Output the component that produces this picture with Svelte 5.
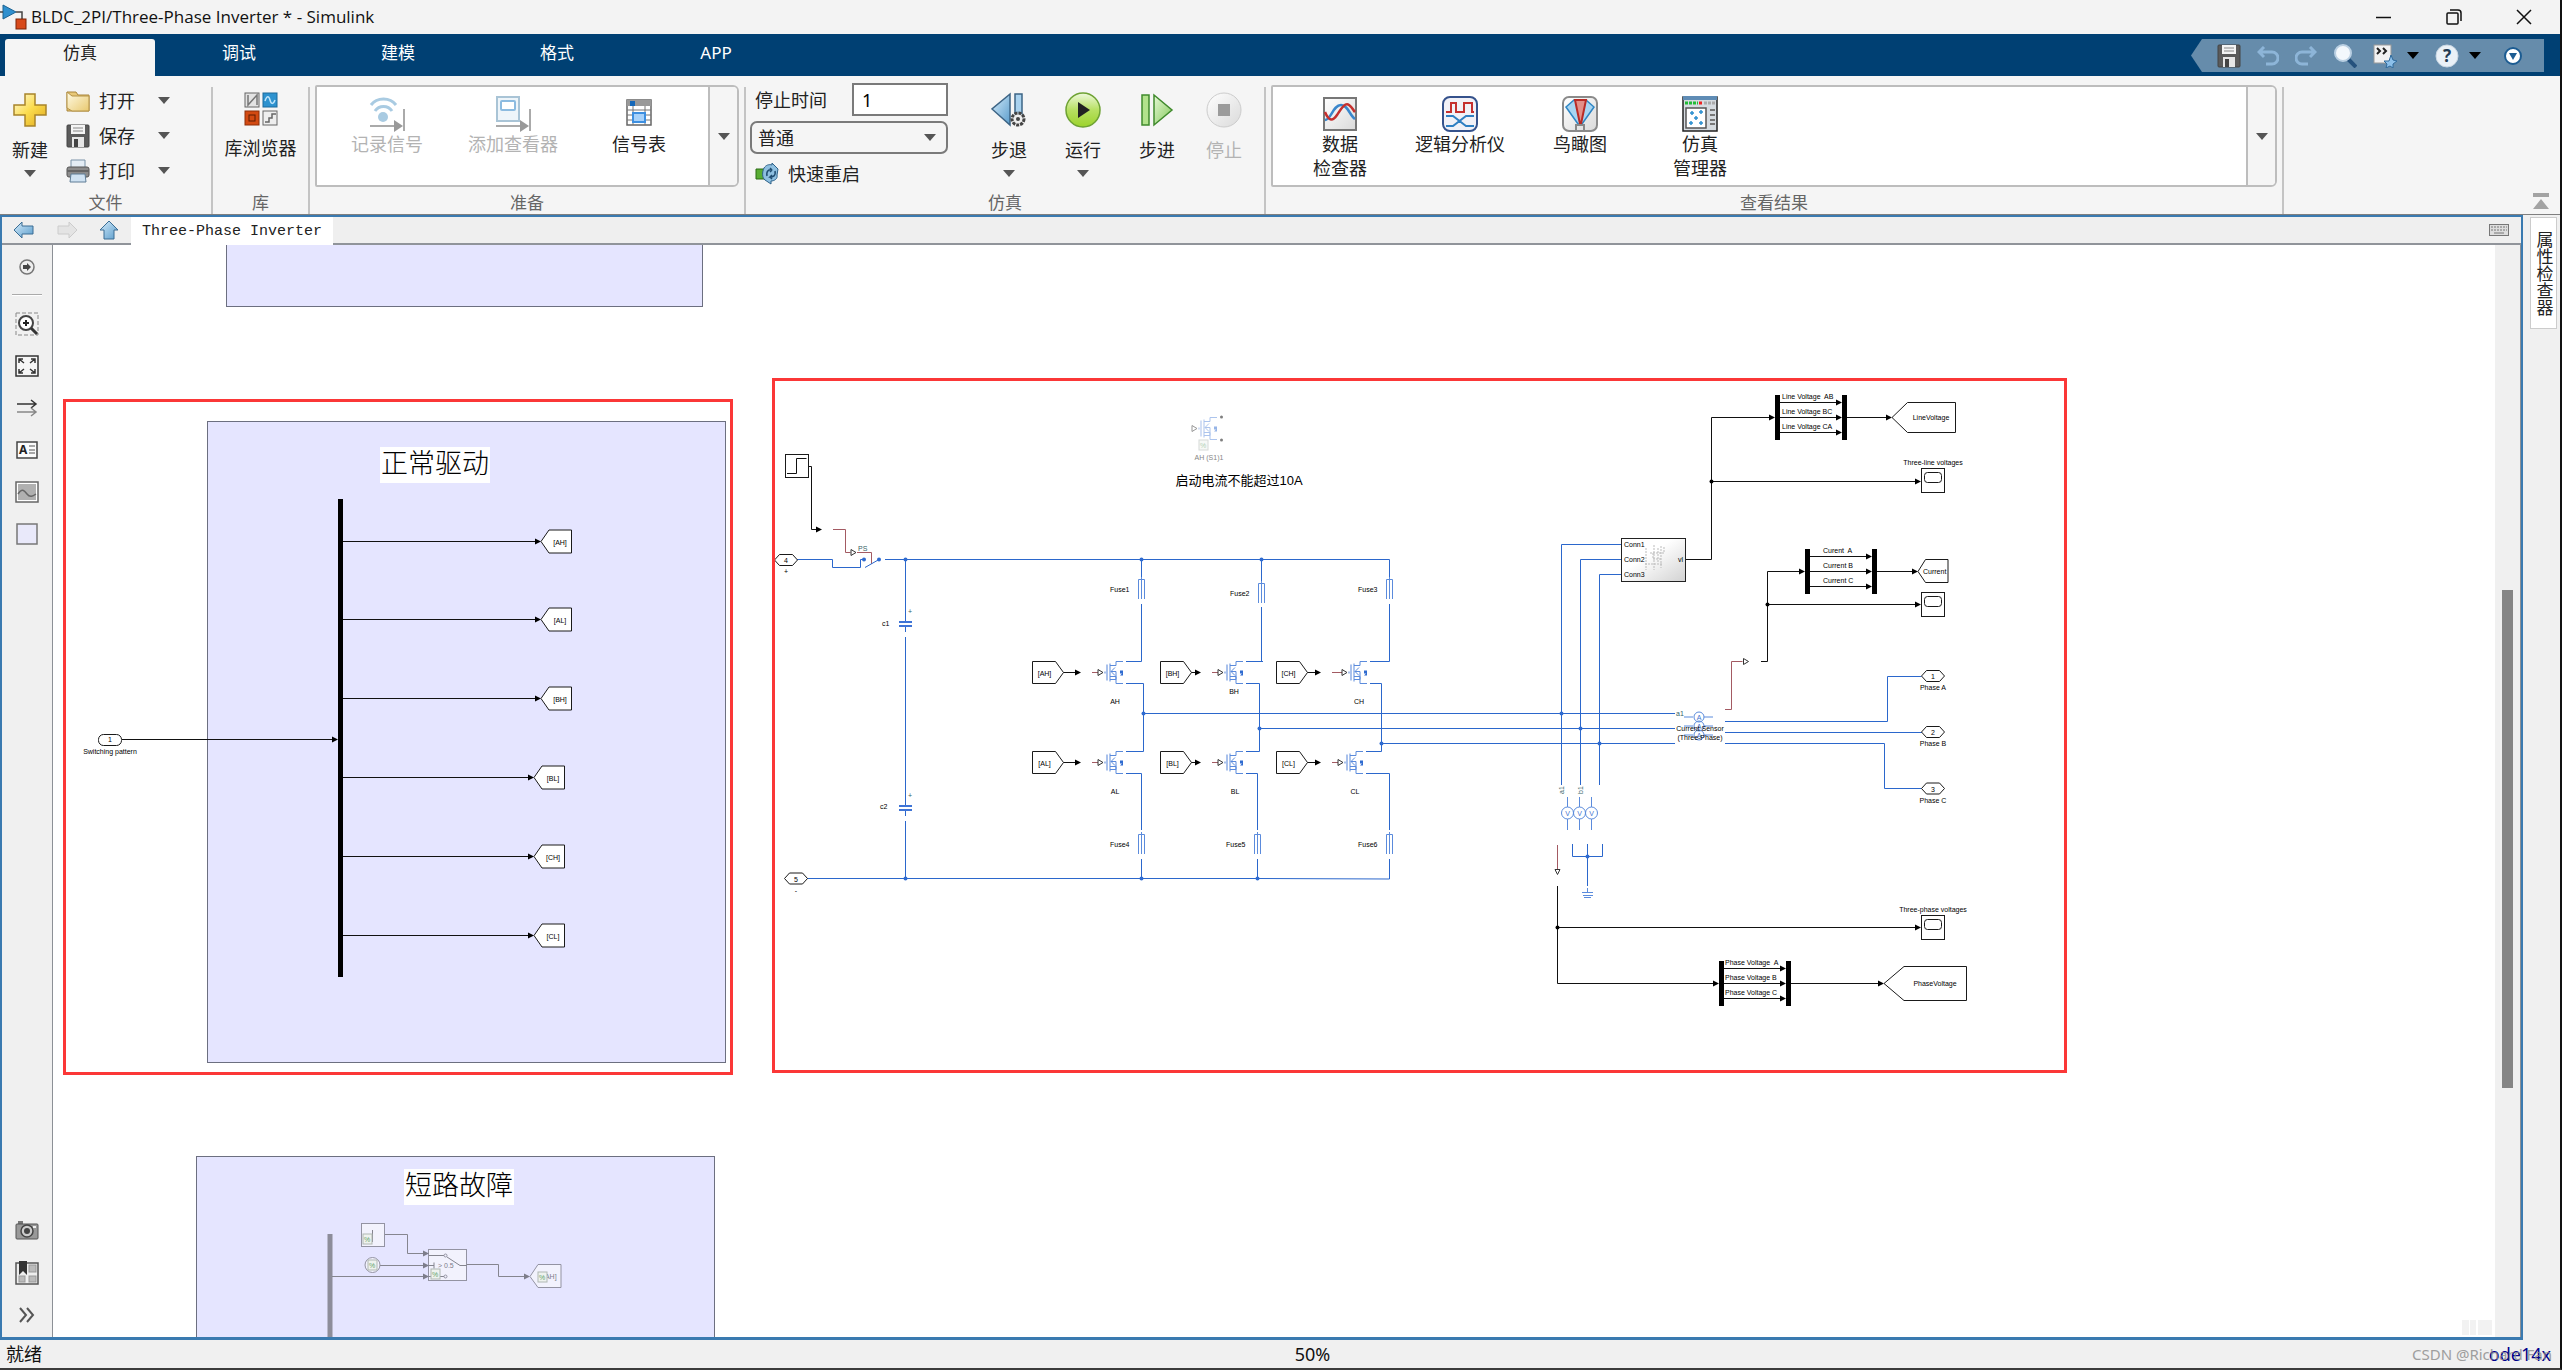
<script lang="ts">
	let tab = $state(0);
	let stopTime = $state('1');
	let mode = $state('普通');

	const tabs = ['仿真', '调试', '建模', '格式', 'APP'];

	const fileRows = [
		{ icon: 'open', label: '打开' },
		{ icon: 'save', label: '保存' },
		{ icon: 'print', label: '打印' }
	];

	const prepare = [
		{ icon: 'log', label: '记录信号', disabled: true },
		{ icon: 'viewer', label: '添加查看器', disabled: true },
		{ icon: 'table', label: '信号表', disabled: false }
	];

	const run = [
		{ icon: 'back', label: '步退', menu: true, disabled: false },
		{ icon: 'run', label: '运行', menu: true, disabled: false },
		{ icon: 'step', label: '步进', menu: false, disabled: false },
		{ icon: 'stop', label: '停止', menu: false, disabled: true }
	];

	const results = [
		{ icon: 'inspector', lines: ['数据', '检查器'] },
		{ icon: 'logic', lines: ['逻辑分析仪'] },
		{ icon: 'bird', lines: ['鸟瞰图'] },
		{ icon: 'manager', lines: ['仿真', '管理器'] }
	];

	const paletteTop = ['zoom', 'fit', 'signals', 'note', 'image', 'area'];
	const paletteBottom = ['camera', 'library', 'more'];

	// gate signals leaving the demux on the left
	const gates = [
		{ name: '[AH]', x: 541, y: 541.5 },
		{ name: '[AL]', x: 541, y: 619.5 },
		{ name: '[BH]', x: 541, y: 698.5 },
		{ name: '[BL]', x: 534, y: 777.5 },
		{ name: '[CH]', x: 534, y: 856.5 },
		{ name: '[CL]', x: 534, y: 935.5 }
	];

	const fuses = [
		{ name: 'Fuse1', x: 1141.5, y: 579 },
		{ name: 'Fuse2', x: 1261.5, y: 583 },
		{ name: 'Fuse3', x: 1389.5, y: 579 },
		{ name: 'Fuse4', x: 1141.5, y: 834 },
		{ name: 'Fuse5', x: 1257.5, y: 834 },
		{ name: 'Fuse6', x: 1389.5, y: 834 }
	];

	const switches = [
		{ name: 'AH', from: 1032.5, tip: 1081, x: 1092, gate: 1098, y: 672.5, lx: 1115, ly: 704 },
		{ name: 'BH', from: 1160.5, tip: 1201, x: 1212, gate: 1218, y: 672.5, lx: 1234, ly: 694 },
		{ name: 'CH', from: 1276.5, tip: 1321, x: 1332, gate: 1342, y: 672.5, lx: 1359, ly: 704 },
		{ name: 'AL', from: 1032.5, tip: 1081, x: 1092, gate: 1098, y: 762.5, lx: 1115, ly: 794 },
		{ name: 'BL', from: 1160.5, tip: 1201, x: 1212, gate: 1218, y: 762.5, lx: 1235, ly: 794 },
		{ name: 'CL', from: 1276.5, tip: 1321, x: 1332, gate: 1338, y: 762.5, lx: 1355, ly: 794 }
	];

	const buses = [
		{ x: 1775, y: 395, tx: 1782, labels: ['Line Voltage  AB', 'Line Voltage BC', 'Line Voltage CA'] },
		{ x: 1805, y: 549, tx: 1823, labels: ['Curent  A', 'Current B', 'Current C'] },
		{ x: 1719, y: 961, tx: 1725, labels: ['Phase Voltage  A', 'Phase Voltage B', 'Phase Voltage C'] }
	];

	const scopes = [
		{ y: 468.5, label: 'Three-line voltages' },
		{ y: 592.5, label: '' },
		{ y: 915.5, label: 'Three-phase voltages' }
	];

	const ports = [
		{ n: 4, x: 786, y: 560, label: '+' },
		{ n: 5, x: 796, y: 878.5, label: '-' },
		{ n: 1, x: 1933, y: 676, label: 'Phase A' },
		{ n: 2, x: 1933, y: 732, label: 'Phase B' },
		{ n: 3, x: 1933, y: 788.5, label: 'Phase C' }
	];

	const joints = [
		[905.5, 559.5], [1141.5, 559.5], [1261.5, 559.5],
		[905.5, 878.5], [1141.5, 878.5], [1257.5, 878.5],
		[1143.5, 713.5], [1259.5, 728.5], [1381.5, 743.5],
		[1561.5, 713.5], [1580.5, 728.5], [1599.5, 743.5],
		[1587.5, 856.5]
	];
</script>

{#snippet caret()}
	<svg class="caret" viewBox="0 0 12 7" aria-hidden="true"><path d="M0 0h12L6 7z" fill="currentColor" /></svg>
{/snippet}

{#snippet floppy()}
	<rect x="1" y="1" width="22" height="22" rx="1" fill="#5b5b5b" stroke="#444" />
	<rect x="5" y="1" width="14" height="9" fill="#f4f4f4" />
	<path d="M7 4h10M7 7h10" stroke="#888" />
	<rect x="6" y="13" width="12" height="10" fill="#e6e6e6" />
	<rect x="8" y="15" width="4" height="8" fill="#444" />
{/snippet}

{#snippet icon(name: string)}
	{#if name === 'new'}
		<svg width="34" height="36" viewBox="0 0 34 36"><path d="M12 2h10v11h11v10H22v11H12V23H1V13h11z" fill="url(#gold)" stroke="#a8842a" stroke-width="1.5" /></svg>
	{:else if name === 'open'}
		<svg width="24" height="24" viewBox="0 0 24 24"><path d="M1 3h9l2 3h11v16H1z" fill="#e8c877" stroke="#a8843a" /><path d="M1 3l5 4h17v15H6l-5-3z" fill="url(#folder)" stroke="#b59347" /></svg>
	{:else if name === 'save'}
		<svg width="24" height="24" viewBox="0 0 24 24">{@render floppy()}</svg>
	{:else if name === 'print'}
		<svg width="24" height="24" viewBox="0 0 24 24"><path d="M5 1h14v8H5z" fill="#e4edf5" stroke="#7b93a8" /><rect x="1" y="8" width="22" height="10" rx="2" fill="#8c8c8c" stroke="#555" /><rect x="1" y="11" width="22" height="2" fill="#666" /><path d="M5 15h14l1 8H4z" fill="#cfe2f2" stroke="#5f7d96" /></svg>
	{:else if name === 'browser'}
		<svg width="34" height="34" viewBox="0 0 34 34"><rect x="1" y="1" width="14" height="14" fill="#e3e3e3" stroke="#666" /><path d="M4 3v10l9-10v10" fill="none" stroke="#777" stroke-width="1.5" /><rect x="19" y="1" width="14" height="14" fill="#2d92cf" stroke="#1d6a9c" /><path d="M21 9c2-6 4-5 5-1s3 5 5 0" fill="none" stroke="#bfe4fa" stroke-width="1.5" /><rect x="1" y="19" width="14" height="14" fill="#d34a12" stroke="#8e2f08" /><rect x="5" y="23" width="6" height="6" fill="none" stroke="#5e1c02" /><rect x="19" y="19" width="14" height="14" fill="#eee" stroke="#666" /><path d="M21 30h4v-4h3v-4h4" fill="none" stroke="#666" stroke-width="1.5" /></svg>
	{:else if name === 'log'}
		<svg width="36" height="36" viewBox="0 0 36 36"><g fill="none" stroke="#a9cbe2" stroke-width="3"><path d="M2 9c6-8 19-8 25 0" /><path d="M6 15c4-6 13-6 17 0" /></g><circle cx="14" cy="21" r="5" fill="#a9cbe2" /><path d="M1 30h27M35 13v22" stroke="#aaa" stroke-width="2" /><path d="M25 24v12l9-6z" fill="#999" /></svg>
	{:else if name === 'viewer'}
		<svg width="36" height="36" viewBox="0 0 36 36"><rect x="2" y="1" width="22" height="24" fill="#eef5fa" stroke="#a9c4d6" stroke-width="2" /><rect x="6" y="5" width="14" height="9" rx="1" fill="#fff" stroke="#8cbbe0" stroke-width="2" /><path d="M1 30h27M35 13v22" stroke="#aaa" stroke-width="2" /><path d="M25 24v12l9-6z" fill="#999" /></svg>
	{:else if name === 'table'}
		<svg width="36" height="36" viewBox="0 0 36 36"><rect x="6" y="4" width="24" height="25" fill="#fff" stroke="#666" stroke-width="1.5" /><rect x="6" y="4" width="24" height="6" fill="#999" /><rect x="9" y="5" width="5" height="5" fill="#1567b8" /><path d="M6 14h24M6 19h24M6 24h24M12 10v19M24 10v19" stroke="#777" /><rect x="12" y="17" width="12" height="9" fill="#a8d2fa" stroke="#3d8fe0" stroke-width="2" /></svg>
	{:else if name === 'restart'}
		<svg width="24" height="22" viewBox="0 0 24 22"><path d="M1 6h9v10H1z" fill="#59ad33" stroke="#2b6b14" /><path d="M9 5c2-3 5-4 8-3V0l6 6-1 6c1 4-3 6-6 6v3l-6-4c-3-2-3-8-1-12z" fill="#8ebfe0" stroke="#2c6189" /><path d="M12 13c-1-5 2-7 5-6l-2-2m2 2l-2 2M20 8c1 5-2 6-5 6l2-2m-2 2l2 2" fill="none" stroke="#1f4c70" stroke-width="1.5" /></svg>
	{:else if name === 'back'}
		<svg width="36" height="36" viewBox="0 0 36 36"><path d="M19 2v31L1 17z" fill="url(#blue)" stroke="#3d6485" stroke-width="1.5" /><rect x="24" y="2" width="7" height="21" fill="#a9d2ef" stroke="#3d6485" stroke-width="1.5" /><circle cx="27" cy="27" r="6" fill="#eee" stroke="#444" stroke-width="3" stroke-dasharray="3 1" /><circle cx="27" cy="27" r="2" fill="#444" /></svg>
	{:else if name === 'run'}
		<svg width="36" height="36" viewBox="0 0 36 36"><circle cx="18" cy="18" r="17" fill="url(#green)" stroke="#6ea233" stroke-width="1.5" /><path d="M13 10l12 8-12 8z" fill="#222" /></svg>
	{:else if name === 'step'}
		<svg width="36" height="36" viewBox="0 0 36 36"><rect x="3" y="3" width="7" height="30" fill="#b2e28c" stroke="#3f8a2c" stroke-width="1.5" /><path d="M15 3l18 15-18 15z" fill="url(#lime)" stroke="#3f8a2c" stroke-width="1.5" /></svg>
	{:else if name === 'stop'}
		<svg width="36" height="36" viewBox="0 0 36 36"><circle cx="18" cy="18" r="17" fill="url(#silver)" stroke="#ccc" /><rect x="12" y="12" width="12" height="12" fill="#9b9b9b" /></svg>
	{:else if name === 'inspector'}
		<svg width="36" height="36" viewBox="0 0 36 36"><rect x="2" y="2" width="32" height="32" fill="url(#silver)" stroke="#777" stroke-width="2" /><path d="M3 24c6 0 8-15 16-15 7 0 9 11 14 14" fill="none" stroke="#3a87cc" stroke-width="2.5" /><path d="M3 16c4 10 8 9 12 3s8-13 12-10 4 5 6 7" fill="none" stroke="#c5302e" stroke-width="2.5" /></svg>
	{:else if name === 'logic'}
		<svg width="36" height="36" viewBox="0 0 36 36"><rect x="1" y="1" width="34" height="34" rx="7" fill="#f1f1f7" stroke="#35528c" stroke-width="2" /><path d="M4 16h5V7h5v9h8V7h8v9h2" fill="none" stroke="#c5302e" stroke-width="2" /><path d="M4 20h7l13 10h8M4 30h7l13-10h8" fill="none" stroke="#2f7fc2" stroke-width="2" /></svg>
	{:else if name === 'bird'}
		<svg width="36" height="36" viewBox="0 0 36 36"><rect x="1" y="1" width="34" height="34" rx="6" fill="url(#silver)" stroke="#8a8a8a" stroke-width="2" /><path d="M4 11l8-7h12l8 7-12 17h-4z" fill="#a8d5f2" stroke="#2f86c4" stroke-width="1.5" /><path d="M13 4h11l-5 24h-1z" fill="#e38f88" stroke="#b92a25" stroke-width="2" /><path d="M14 34v-5h8v5" fill="none" stroke="#888" stroke-width="2" /></svg>
	{:else if name === 'manager'}
		<svg width="36" height="36" viewBox="0 0 36 36"><rect x="1" y="1" width="34" height="34" fill="#d6dbe0" stroke="#222" stroke-width="1.5" /><rect x="1" y="0" width="34" height="4" fill="#5f8cb5" /><path d="M3 7h13" stroke="#20bb35" stroke-width="3" stroke-dasharray="3 1" /><path d="M17 7h3" stroke="#e22" stroke-width="3" /><path d="M22 7h11" stroke="#aaa" stroke-width="3" stroke-dasharray="3 1" /><rect x="4" y="12" width="20" height="20" fill="#fff" stroke="#555" stroke-width="1.5" /><path d="M8 17h4M10 15v4M17 16h4M19 14v4M12 22h4M14 20v4M7 27h4M9 25v4M17 27h4M19 25v4" stroke="#2b8fd0" stroke-width="1.5" /><path d="M28 14h5M28 19h5M28 24h5M28 28h5" stroke="#777" stroke-width="2" /></svg>
	{:else if name === 'zoom'}
		<svg width="24" height="24" viewBox="0 0 24 24"><rect x="1" y="1" width="22" height="22" fill="none" stroke="#888" stroke-dasharray="4 2" /><circle cx="11" cy="11" r="7" fill="#fff" stroke="#444" stroke-width="2" /><path d="M8 11h6M11 8v6" stroke="#222" stroke-width="2" /><path d="M16 16l6 6" stroke="#333" stroke-width="3" /></svg>
	{:else if name === 'fit'}
		<svg width="24" height="22" viewBox="0 0 24 22"><rect x="1" y="1" width="22" height="20" fill="#f6f6f6" stroke="#333" stroke-width="1.5" /><path d="M4 8V4h4M16 4h4v4M20 14v4h-4M8 18H4v-4M4 4l5 4M20 4l-5 4M20 18l-5-4M4 18l5-4" fill="none" stroke="#333" stroke-width="1.5" /></svg>
	{:else if name === 'signals'}
		<svg width="24" height="18" viewBox="0 0 24 18"><path d="M2 5h18M16 1l5 4-5 4" fill="none" stroke="#333" stroke-width="1.5" /><path d="M2 13h18M16 9l5 4-5 4" fill="none" stroke="#888" stroke-width="1.5" /></svg>
	{:else if name === 'note'}
		<svg width="22" height="18" viewBox="0 0 22 18"><rect x="1" y="1" width="20" height="16" fill="#fbfbfb" stroke="#444" stroke-width="1.5" /><text x="3" y="13" font-size="12" font-weight="700" fill="#222">A</text><path d="M13 5h6M13 9h6M13 12h6" stroke="#555" /></svg>
	{:else if name === 'image'}
		<svg width="24" height="22" viewBox="0 0 24 22"><rect x="1" y="1" width="22" height="20" fill="#fff" stroke="#666" stroke-width="1.5" /><rect x="3" y="3" width="18" height="16" fill="#b0b0b0" /><path d="M3 13c4-6 6-4 9 0s6 2 9 0" fill="none" stroke="#666" stroke-width="1.5" /></svg>
	{:else if name === 'area'}
		<svg width="22" height="22" viewBox="0 0 22 22"><rect x="1" y="1" width="20" height="20" fill="#e9e9fa" stroke="#777" stroke-width="1.5" /></svg>
	{:else if name === 'camera'}
		<svg width="24" height="20" viewBox="0 0 24 20"><rect x="3" y="0" width="5" height="4" fill="#777" /><rect x="1" y="3" width="22" height="15" rx="1" fill="#999" stroke="#555" /><circle cx="12" cy="10" r="6" fill="#ccc" stroke="#444" stroke-width="1.5" /><circle cx="12" cy="10" r="3" fill="#444" /><rect x="18" y="5" width="3" height="2" fill="#eee" /></svg>
	{:else if name === 'library'}
		<svg width="24" height="24" viewBox="0 0 24 24"><rect x="1" y="2" width="22" height="21" fill="#eee" stroke="#555" stroke-width="1.5" /><rect x="14" y="4" width="7" height="7" fill="#bbb" stroke="#999" /><rect x="4" y="15" width="6" height="6" fill="#bbb" stroke="#999" /><rect x="14" y="15" width="7" height="6" fill="#bbb" stroke="#999" /><path d="M4 0h8v14l-4-4-4 4z" fill="#333" /></svg>
	{:else if name === 'more'}
		<svg width="18" height="16" viewBox="0 0 18 16"><path d="M2 1l6 7-6 7M9 1l6 7-6 7" fill="none" stroke="#555" stroke-width="2" /></svg>
	{/if}
{/snippet}

{#snippet arrow(x: number, y: number)}
	<path d="M{x} {y}l-6-3v6z" class="solid" />
{/snippet}

{#snippet mosfet(x: number, y: number)}
	<path class="gate" d="M{x} {y - 3}v6l5-3z" />
	<path class="pale" d="M{x + 6} {y}h2M{x + 9} {y - 8}v16" />
	<path class="part" d="M{x + 12} {y - 9}v18M{x + 12} {y - 7}h6v-4h7M{x + 12} {y + 4}h6v7h7M{x + 18} {y + 7}v-8h-5m4-4l-4 4 4 4M{x + 12} {y + 7}h6" />
	<path class="fillpart" d="M{x + 22} {y - 2}h3v5h-3l2-2h-2z" />
{/snippet}

{#snippet skipped(x: number, y: number)}
	<rect {x} {y} width="9" height="10" fill="#eef2ee" stroke="#b0b8b4" />
	<text class="percent" x={x + 1} y={y + 8}>%</text>
{/snippet}

<svg class="defs" width="0" height="0" aria-hidden="true">
	<defs>
		<linearGradient id="gold" x2="1" y2="1"><stop stop-color="#fffbe0" /><stop offset=".5" stop-color="#fbdc4e" /><stop offset="1" stop-color="#e0a81c" /></linearGradient>
		<linearGradient id="folder" x2="1" y2="1"><stop stop-color="#fffbe6" /><stop offset="1" stop-color="#e9c970" /></linearGradient>
		<linearGradient id="blue" x2="1" y2="1"><stop stop-color="#d5ecfb" /><stop offset="1" stop-color="#5a9ccb" /></linearGradient>
		<linearGradient id="green" x2="0" y2="1"><stop stop-color="#eef9dc" /><stop offset=".5" stop-color="#b7e062" /><stop offset="1" stop-color="#9cd32c" /></linearGradient>
		<linearGradient id="lime" x2="1" y2="1"><stop stop-color="#e6f8d6" /><stop offset="1" stop-color="#83c95a" /></linearGradient>
		<linearGradient id="silver" x2="1" y2="1"><stop stop-color="#fff" /><stop offset="1" stop-color="#dadada" /></linearGradient>
	</defs>
</svg>

<div class="app">
	<header class="title">
		<svg width="28" height="26" viewBox="0 0 28 26" aria-hidden="true"><path d="M3 1l13 7-13 7z" fill="#2f90cf" stroke="#1d6290" /><path d="M0 8h3M16 8h6v8" fill="none" stroke="#444" stroke-width="1.5" /><rect x="16" y="15" width="10" height="10" fill="#d84a1b" stroke="#7d2508" /></svg>
		<h1>BLDC_2PI/Three-Phase Inverter * - Simulink</h1>
		<div class="window-buttons">
			<button aria-label="最小化"><svg width="16" height="16" viewBox="0 0 16 16"><path d="M0 8.5h15" /></svg></button>
			<button aria-label="还原"><svg width="16" height="16" viewBox="0 0 16 16"><rect x="1" y="4" width="11" height="11" rx="1" /><path d="M4 1h8a3 3 0 0 1 3 3v8" /></svg></button>
			<button aria-label="关闭"><svg width="16" height="16" viewBox="0 0 16 16"><path d="M1 1l14 14M15 1L1 15" /></svg></button>
		</div>
	</header>

	<nav class="tabs">
		{#each tabs as name, i (name)}
			<button class:active={tab === i} onclick={() => (tab = i)}>{name}</button>
		{/each}
		<div class="quick">
			<button aria-label="保存"><svg width="24" height="24" viewBox="0 0 24 24">{@render floppy()}</svg></button>
			<button aria-label="撤销"><svg width="22" height="20" viewBox="0 0 22 20"><path d="M7 1L2 6l5 5M2 6h13a5 5 0 0 1 0 12H9" fill="none" stroke="#8db5d8" stroke-width="3" /></svg></button>
			<button aria-label="重做"><svg width="22" height="20" viewBox="0 0 22 20"><path d="M15 1l5 5-5 5M20 6H7a5 5 0 0 0 0 12h6" fill="none" stroke="#8db5d8" stroke-width="3" /></svg></button>
			<button aria-label="查找"><svg width="24" height="24" viewBox="0 0 24 24"><path d="M15 15l8 8" stroke="#26527d" stroke-width="4" /><circle cx="10" cy="9" r="8" fill="#f3f8fc" stroke="#b9cfe2" stroke-width="2" /></svg></button>
			<button class="with-menu" aria-label="收藏夹"><svg width="24" height="24" viewBox="0 0 24 24"><rect x="1" y="1" width="17" height="18" fill="#f2f2f2" stroke="#999" /><path d="M4 4l3 3-3 3M10 4l3 3-3 3" fill="none" stroke="#222" stroke-width="2" /><path d="M18 11l2 5 4 1-4 3v4l-3-2-4 2 1-4-3-3h5z" fill="#8cc0ea" stroke="#2f6a9c" /></svg>{@render caret()}</button>
			<button class="with-menu" aria-label="帮助"><svg width="24" height="24" viewBox="0 0 24 24"><circle cx="12" cy="12" r="11" fill="#eaf1f7" stroke="#c8d6e2" /><text x="12" y="18" text-anchor="middle" font-size="17" font-weight="700" fill="#223a52">?</text></svg>{@render caret()}</button>
			<button aria-label="自定义"><svg width="20" height="20" viewBox="0 0 20 20"><circle cx="10" cy="10" r="8" fill="#fff" stroke="#1c5c92" stroke-width="2" /><path d="M6 7h8l-4 7z" fill="#1c5c92" /></svg></button>
		</div>
	</nav>

	<section class="ribbon">
		<div class="group file">
			<div class="body">
				<button class="big">{@render icon('new')}<span>新建</span>{@render caret()}</button>
				<div class="rows">
					{#each fileRows as row (row.label)}
						<button class="row">{@render icon(row.icon)}<span>{row.label}</span>{@render caret()}</button>
					{/each}
				</div>
			</div>
			<h2>文件</h2>
		</div>
		<div class="group lib">
			<div class="body">
				<button class="big">{@render icon('browser')}<span>库浏览器</span></button>
			</div>
			<h2>库</h2>
		</div>
		<div class="group prep">
			<div class="gallery">
				<div class="items">
					{#each prepare as item (item.label)}
						<button class="item" disabled={item.disabled}>{@render icon(item.icon)}<span>{item.label}</span></button>
					{/each}
				</div>
				<button class="expand" aria-label="展开准备">{@render caret()}</button>
			</div>
			<h2>准备</h2>
		</div>
		<div class="group sim">
			<div class="body">
				<div class="settings">
					<div class="field"><label for="stop">停止时间</label><input id="stop" bind:value={stopTime} /></div>
					<div class="select">
						<select bind:value={mode} aria-label="仿真模式">
							<option>普通</option>
							<option>加速</option>
						</select>
						{@render caret()}
					</div>
					<button class="restart">{@render icon('restart')}<span>快速重启</span></button>
				</div>
				{#each run as item (item.label)}
					<button class="big" disabled={item.disabled}>
						{@render icon(item.icon)}<span>{item.label}</span>
						{#if item.menu}{@render caret()}{/if}
					</button>
				{/each}
			</div>
			<h2>仿真</h2>
		</div>
		<div class="group review">
			<div class="gallery">
				<div class="items">
					{#each results as item (item.icon)}
						<button class="item">
							{@render icon(item.icon)}
							{#each item.lines as line (line)}<span>{line}</span>{/each}
						</button>
					{/each}
				</div>
				<button class="expand" aria-label="展开查看结果">{@render caret()}</button>
			</div>
			<h2>查看结果</h2>
		</div>
		<button class="collapse" aria-label="最小化工具条"><svg width="16" height="17" viewBox="0 0 16 17"><path d="M0 0h16v4H0zM8 6l8 10H0z" fill="#a3a3a3" /></svg></button>
	</section>

	<div class="workspace">
		<main class="editor">
			<div class="crumbs">
				<button aria-label="后退"><svg width="22" height="18" viewBox="0 0 22 18"><path d="M9 1v4h11v8H9v4L1 9z" fill="url(#blue)" stroke="#3a6d94" /></svg></button>
				<button aria-label="前进"><svg width="22" height="18" viewBox="0 0 22 18"><path d="M13 1v4H2v8h11v4l8-8z" fill="#e4e4e4" stroke="#ccc" /></svg></button>
				<button aria-label="上一级"><svg width="20" height="20" viewBox="0 0 20 20"><path d="M10 1l9 9h-4v9H5v-9H1z" fill="url(#blue)" stroke="#3a6d94" /></svg></button>
				<a href="#inverter">Three-Phase Inverter</a>
				<svg class="keyboard" width="20" height="12" viewBox="0 0 20 12" aria-hidden="true"><rect x=".5" y=".5" width="19" height="11" fill="#ddd" stroke="#777" /><path d="M2 3h16M2 6h16" stroke="#777" stroke-dasharray="2 1" /><path d="M5 9h10" stroke="#777" /></svg>
			</div>
			<div class="stage">
				<aside class="palette">
					<button aria-label="隐藏浏览器"><svg width="16" height="16" viewBox="0 0 16 16"><circle cx="8" cy="8" r="7" fill="#eee" stroke="#777" stroke-width="1.5" /><path d="M4 6h4V4l4 4-4 4v-2H4z" fill="#444" /></svg></button>
					<hr />
					{#each paletteTop as name (name)}
						<button aria-label={name}>{@render icon(name)}</button>
					{/each}
					<div class="spacer"></div>
					{#each paletteBottom as name (name)}
						<button aria-label={name}>{@render icon(name)}</button>
					{/each}
				</aside>

				<svg class="canvas" role="img" aria-label="Three-Phase Inverter">
					<defs>
						<linearGradient id="block" x2="1" y2="1"><stop offset=".4" stop-color="#fff" /><stop offset="1" stop-color="#d2d2d2" /></linearGradient>
					</defs>
					<g transform="translate(-53 -245)">
						<rect class="area" x="226.5" y="200.5" width="476" height="106" />
						<rect class="area" x="207.5" y="421.5" width="518" height="641" />
						<rect class="area" x="196.5" y="1156.5" width="518" height="260" />

						<rect x="380" y="447" width="110" height="36" fill="#fff" />
						<text class="heading" x="435" y="473">正常驱动</text>
						<rect x="404" y="1169" width="110" height="36" fill="#fff" />
						<text class="heading" x="459" y="1195">短路故障</text>

						<!-- normal drive -->
						<rect x="338" y="499" width="5" height="478" />
						{#each gates as g (g.name)}
							<path class="sig" d="M343 {g.y}H{g.x - 4}" />
							{@render arrow(g.x, g.y)}
							<path class="block" d="M{g.x} {g.y}l8-11.5h22.5v23H{g.x + 8}z" />
							<text class="mid" x={g.x + 19} y={g.y + 3}>{g.name}</text>
						{/each}
						<rect class="block" x="98.5" y="734.5" width="23" height="11" rx="5" />
						<text class="mid" x="110" y="742">1</text>
						<text class="mid" x="110" y="754">Switching pattern</text>
						<path class="sig" d="M122 739.5h212" />
						{@render arrow(338, 739.5)}

						<!-- short circuit fault, commented out -->
						<g class="off">
							<rect x="327.5" y="1234" width="5" height="110" fill="#8d8d9a" />
							<rect class="block" x="361.5" y="1223.5" width="23" height="23" />
							<path class="sig" d="M385 1234.5h22.5v19h17M380 1265.5h44M332 1276.5h92M467 1264.5h31.5v12h27" />
							<circle class="block" cx="372.5" cy="1265" r="7.5" />
							<rect class="block" x="428.5" y="1249.5" width="38" height="31" />
							<path class="sig" d="M429 1255.5h15M447 1257l13 8.5h7M429 1265.5h5m0-3v6M429 1276.5h15" />
							<circle class="block" cx="445.5" cy="1255.5" r="1.5" />
							<circle class="block" cx="445.5" cy="1276.5" r="1.5" />
							<text x="438" y="1268">&gt; 0.5</text>
							{@render arrow(429, 1253.5)}
							{@render arrow(429, 1265.5)}
							{@render arrow(429, 1276.5)}
							{@render arrow(530, 1276.5)}
							<path class="block" d="M530 1276.5l8-12h23v23h-23z" />
							<path class="sig" d="M372.5 1230v12M372 1260v5h5" />
							<text x="543" y="1279">[AH]</text>
							{@render skipped(363, 1234)}
							{@render skipped(368, 1260)}
							{@render skipped(431, 1269)}
							{@render skipped(538, 1272)}
						</g>

						<!-- precharge step and switch -->
						<rect class="block" x="785.5" y="454.5" width="23" height="23" />
						<path class="sig" d="M787 473.5h9.5v-15h10M809 466.5h2.5v63h6" />
						{@render arrow(822, 529.5)}
						<path class="ps" d="M833 529.5h12.5v23h5M857 552.5h14.5V564" />
						<path class="gate" d="M851 549.5v6l5-3z" />
						<text class="port" x="858" y="551">PS</text>
						<path class="wire" d="M797 559.5h35.5v8h28v-8h3M865 567.5l14-8M885 559.5h504.5" />
						<circle class="joint" cx="864" cy="559.5" r="2" />
						<circle class="joint" cx="879" cy="559.5" r="2" />
						<g opacity=".5">
							{@render mosfet(1192, 428.5)}
							<circle cx="1221.5" cy="417" r="1.5" />
							<circle cx="1221.5" cy="440" r="1.5" />
							{@render skipped(1199, 440)}
							<text class="mid" x="1209" y="460">AH (S1)1</text>
						</g>
						<text class="remark" x="1239" y="485">启动电流不能超过10A</text>

						<!-- dc link -->
						<path class="wire" d="M905.5 559.5V621M905.5 626v6M905.5 637v168M905.5 810v6M905.5 821v57.5" />
						<path class="plate" d="M899 622h13M899 626h13M899 806h13M899 810h13" />
						<text class="port" x="908" y="614">+</text>
						<text class="port" x="908" y="798">+</text>
						<text x="882" y="626">c1</text>
						<text x="880" y="809">c2</text>
						<path class="wire" d="M807 878.5h450.5l132 .5V859M1141.5 878.5V859M1257.5 878.5V859" />

						<!-- bridge -->
						<path class="wire" d="M1141.5 559.5V577M1261.5 559.5V581M1389.5 559.5V577" />
						<path class="wire" d="M1141.5 604v57.5H1126M1261.5 607v54.5M1263 661.5h-17M1389.5 604v57.5H1370" />
						<path class="wire" d="M1126 683.5h17.5v68H1126M1246 683.5h13.5v68H1246M1370 683.5h11.5v68H1366" />
						<path class="wire" d="M1126 773.5h15.5V830M1246 773.5h11.5V830M1366 773.5h23.5V830" />
						{#each fuses as f (f.name)}
							<path class="part" d="M{f.x - 3} {f.y + 20}v-19.5h6v19.5M{f.x} {f.y - 2}v22" />
							<text class="end" x={f.x - 12} y={f.y + 13}>{f.name}</text>
						{/each}
						{#each switches as s (s.name)}
							<path class="block" d="M{s.from} {s.y - 11}h23l8 11-8 11h-23z" />
							<text class="mid" x={s.from + 12} y={s.y + 3}>[{s.name}]</text>
							<path class="sig" d="M{s.from + 31} {s.y}H{s.tip - 5}" />
							{@render arrow(s.tip, s.y)}
							<path class="ps" d="M{s.x} {s.y}H{s.gate}" />
							{@render mosfet(s.gate, s.y)}
							<text class="mid" x={s.lx} y={s.ly}>{s.name}</text>
						{/each}

						<!-- phases and line voltages -->
						<path class="wire" d="M1143.5 713.5H1675M1259.5 728.5H1675M1381.5 743.5H1675" />
						<path class="wire" d="M1561.5 785V544.5H1622M1580.5 785V559.5H1622M1599.5 785V574.5H1622" />
						<rect x="1621.5" y="538.5" width="64" height="43" fill="url(#block)" stroke="#222" />
						<path d="M1646 548v22M1650 553h14v-7M1654 545v25M1661 546v22M1645 564h18M1653 553v6h8M1658 548v14" fill="none" stroke="#bbb" stroke-dasharray="2 1" />
						<text x="1624" y="547">Conn1</text>
						<text x="1624" y="562">Conn2</text>
						<text x="1624" y="577">Conn3</text>
						<text x="1678" y="562">vl</text>
						<path class="sig" d="M1686 559.5h25.5v-142h59M1711.5 481.5H1917M1847 417.5h41" />
						{@render arrow(1775, 417.5)}
						{@render arrow(1921, 481.5)}
						{@render arrow(1892, 417.5)}
						<path class="block" d="M1892 417.5l15.5-15h48v30h-48z" />
						<text class="mid" x="1931" y="420">LineVoltage</text>

						<!-- currents -->
						<path class="ps" d="M1725 709.5h6.5v-48h11" />
						<path class="gate" d="M1743.5 658.5v6l5-3z" />
						<path class="sig" d="M1761 661.5h6.5v-90h33M1767.5 604.5H1917M1877 571.5h36" />
						{@render arrow(1805, 571.5)}
						{@render arrow(1921, 604.5)}
						{@render arrow(1918, 571.5)}
						<path class="block" d="M1918 571.5l7.5-12h22.5v23h-22.5z" />
						<text x="1923" y="574">Current</text>
						<path class="part" d="M1684 717h9M1704 717h9M1684 726h9M1704 726h9M1684 735h9M1704 735h9" />
						{#each [717, 726, 735] as y (y)}
							<circle class="part" cx="1699" cy={y} r="5" />
							<text class="meter" x="1699" y={y + 3}>A</text>
						{/each}
						<text class="port" x="1676" y="716">a1</text>
						<text class="mid" x="1700" y="731">Current Sensor</text>
						<text class="mid" x="1700" y="740">(Three-Phase)</text>
						<path class="wire" d="M1725 721.5h162.5v-45h34M1725 732.5h197M1725 743.5h159.5v45h37" />

						<!-- phase voltages -->
						<text class="port" transform="translate(1564 794) rotate(-90)">a1</text>
						<text class="port" transform="translate(1583 794) rotate(-90)">b1</text>
						{#each [1567.5, 1579.5, 1591.5] as x (x)}
							<path class="part" d="M{x} 797v10M{x} 819v11" />
							<circle class="part" cx={x} cy="813" r="6" />
							<text class="meter" x={x} y="816">V</text>
						{/each}
						<path class="wire" d="M1572.5 844v12.5h30V844M1587.5 844v42" />
						<path class="part" d="M1587.5 888v4M1582 892.5h11M1583 895.5h10M1584 897.5h7" />
						<path class="ps" d="M1557.5 845v24" />
						<path class="gate" d="M1555 869.5h5l-2.5 5z" />
						<path class="sig" d="M1557.5 886v97.5h157M1557.5 927.5H1917M1791 983.5h88" />
						{@render arrow(1719, 983.5)}
						{@render arrow(1921, 927.5)}
						{@render arrow(1884, 983.5)}
						<path class="block" d="M1884 983.5l20-17h62.5v34H1904z" />
						<text class="mid" x="1935" y="986">PhaseVoltage</text>

						{#each buses as b (b.x)}
							<rect x={b.x} y={b.y} width="5" height="45" />
							<rect x={b.x + 67} y={b.y} width="5" height="45" />
							{#each b.labels as label, i (label)}
								<text x={b.tx} y={b.y + 4 + i * 15}>{label}</text>
								<path class="sig" d="M{b.x + 5} {b.y + 7.5 + i * 15}h58" />
								{@render arrow(b.x + 67, b.y + 7.5 + i * 15)}
							{/each}
						{/each}

						{#each scopes as s (s.y)}
							<text class="mid" x="1933" y={s.y - 4}>{s.label}</text>
							<rect class="block" x="1921.5" y={s.y} width="23" height="24" />
							<rect class="block" x="1924.5" y={s.y + 4} width="17" height="10" rx="3" />
						{/each}

						{#each ports as p (p.n)}
							<path class="block" d="M{p.x - 11.5} {p.y}l5-5.5h13l5 5.5-5 5.5h-13z" />
							<text class="mid" x={p.x} y={p.y + 3}>{p.n}</text>
							<text class="mid" x={p.x} y={p.y + 14}>{p.label}</text>
						{/each}

						{#each joints as [x, y] (x + '-' + y)}
							<circle class="joint" cx={x} cy={y} r="2" />
						{/each}
						<circle cx="1711.5" cy="481.5" r="2" />
						<circle cx="1767.5" cy="604.5" r="2" />
						<circle cx="1557.5" cy="927.5" r="2" />

						<rect class="mark" x="64.5" y="400.5" width="667" height="673" />
						<rect class="mark" x="773.5" y="379.5" width="1292" height="692" />
						<path d="M2462 1320h7v15h-7zM2470 1320h6v15h-6zM2478 1320h14v15h-14z" fill="#f2f2f2" />
					</g>
				</svg>
				<div class="scroll"><div class="thumb"></div></div>
			</div>
		</main>
		<aside class="dock"><button>属性检查器</button></aside>
	</div>

	<footer class="status">
		<span>就绪</span>
		<span>50%</span>
		<a href="#solver">ode14x</a>
		<span class="credit">CSDN @Richard Fan</span>
	</footer>
</div>

<style>
	:global(body) {
		margin: 0;
		background: #1b1b1b;
	}

	.defs {
		position: absolute;
	}

	.app {
		display: flex;
		flex-direction: column;
		height: 100vh;
		box-sizing: border-box;
		border-right: 2px solid #111;
		border-bottom: 2px solid #3c3c3c;
		background: #f0f0f0;
		color: #222;
		font-family: 'Noto Sans', 'Noto Sans CJK SC', sans-serif;
		font-size: 18px;
		line-height: 24px;
	}

	button {
		padding: 0;
		border: 0;
		background: none;
		color: inherit;
		font: inherit;
	}

	svg {
		display: block;
		flex: none;
	}

	.caret {
		width: 12px;
		height: 7px;
		color: #555;
	}

	.title {
		display: flex;
		align-items: center;
		gap: 3px;
		height: 34px;
		background: #f3f3f3;
		color: #111;
	}

	h1 {
		margin: 0;
		font-family: 'Open Sans', sans-serif;
		font-size: 17px;
		font-weight: 400;
	}

	.window-buttons {
		display: flex;
		gap: 54px;
		margin-left: auto;
		padding-right: 28px;
	}

	.window-buttons svg {
		fill: none;
		stroke: #111;
		stroke-width: 1.5;
	}

	.tabs {
		display: flex;
		height: 42px;
		box-sizing: border-box;
		padding: 5px 16px 0 5px;
		background: #004073;
		color: #fff;
	}

	.tabs > button {
		width: 150px;
		margin-right: 9px;
		padding-bottom: 10px;
		border-radius: 3px 3px 0 0;
		font-size: 17px;
	}

	.tabs > .active {
		background: #f5f5f5;
		color: #222;
	}

	.quick {
		display: flex;
		align-items: center;
		gap: 16px;
		height: 33px;
		box-sizing: border-box;
		margin-left: auto;
		padding: 0 21px 0 26px;
		background: #668cab;
		clip-path: polygon(11px 0, 100% 0, 100% 100%, 11px 100%, 0 50%);
	}

	.with-menu {
		display: flex;
		align-items: center;
		gap: 10px;
	}

	.quick .caret {
		color: #000;
	}

	.quick > :last-child {
		margin-left: 6px;
	}

	.ribbon {
		display: flex;
		height: 138px;
		border-bottom: 1px solid #7f7f7f;
		background: #f5f5f5;
	}

	.group {
		display: flex;
		flex-direction: column;
		justify-content: space-between;
		box-sizing: border-box;
		padding-top: 9px;
		border-right: 2px solid #c4c4c4;
		border-image: linear-gradient(transparent 12px, #c4c4c4 12px) 1;
	}

	.group h2 {
		margin: 0;
		color: #666;
		font-size: 17px;
		font-weight: 400;
		text-align: center;
		line-height: 22px;
	}

	.file { width: 213px; }
	.lib { width: 97px; }
	.prep { width: 436px; }
	.sim { width: 520px; }
	.review { flex: 1; max-width: 1018px; }

	.body {
		display: flex;
	}

	.big {
		display: flex;
		flex-direction: column;
		align-items: center;
		width: 74px;
		height: 100px;
		padding-top: 7px;
	}

	.big span {
		margin: 10px 0 8px;
		white-space: nowrap;
	}

	.file .big {
		width: 60px;
	}

	.lib .big {
		width: 100%;
	}

	.sim .big:last-child {
		width: 60px;
	}

	button:disabled {
		color: #b3b3b3;
	}

	.rows {
		display: flex;
		flex-direction: column;
		margin-top: -2px;
	}

	.row {
		display: flex;
		align-items: center;
		height: 35px;
		padding-left: 6px;
	}

	.row span {
		margin: 0 23px 0 9px;
	}

	.gallery {
		display: flex;
		height: 102px;
		box-sizing: border-box;
		margin: 0 5px;
		border: 2px solid #bdbdbd;
		border-radius: 2px 6px 6px 2px;
		background: #fff;
	}

	.items {
		display: flex;
		flex: 1;
		padding-left: 7px;
	}

	.item {
		display: flex;
		flex-direction: column;
		align-items: center;
		width: 120px;
		padding-top: 9px;
	}

	.prep .item {
		width: 126px;
	}

	.expand {
		display: grid;
		place-items: center;
		width: 29px;
		border-left: 2px solid #bdbdbd;
		background: #f5f5f5;
		border-radius: 0 4px 4px 0;
	}

	.settings {
		display: flex;
		flex-direction: column;
		gap: 5px;
		width: 198px;
		margin: -2px 24px 0 4px;
	}

	.field {
		display: flex;
		align-items: center;
		justify-content: space-between;
		padding-left: 5px;
	}

	input {
		width: 96px;
		height: 33px;
		box-sizing: border-box;
		padding: 0 8px;
		border: 2px solid #7a7a7a;
		background: #fff;
		font: inherit;
	}

	.select {
		position: relative;
	}

	select {
		width: 100%;
		height: 33px;
		padding: 0 6px;
		border: 2px solid #7a7a7a;
		border-radius: 7px;
		background: #f5f5f5;
		color: inherit;
		font: inherit;
		appearance: none;
	}

	.select .caret {
		position: absolute;
		top: 13px;
		right: 12px;
		pointer-events: none;
	}

	.restart {
		display: flex;
		align-items: center;
		gap: 9px;
		height: 30px;
		padding-left: 5px;
	}

	.collapse {
		align-self: flex-end;
		margin: 0 11px 4px auto;
	}

	.workspace {
		display: flex;
		flex: 1;
		min-height: 0;
	}

	.editor {
		display: flex;
		flex: 1;
		flex-direction: column;
		min-width: 0;
		border: 2px solid #3a7ab0;
		border-bottom-width: 3px;
	}

	.crumbs {
		display: flex;
		align-items: center;
		height: 26px;
		padding-left: 11px;
		border-bottom: 2px solid #90949a;
		background: #efefef;
	}

	.crumbs button {
		margin-right: 21px;
	}

	.crumbs button:nth-of-type(3) {
		margin-right: 12px;
	}

	.crumbs a {
		height: 28px;
		margin-bottom: -2px;
		padding: 0 11px;
		background: #fff;
		color: #222;
		font-family: 'Liberation Mono', monospace;
		font-size: 15px;
		line-height: 30px;
		text-decoration: none;
	}

	.keyboard {
		margin: 0 12px 0 auto;
	}

	.stage {
		display: flex;
		flex: 1;
		min-height: 0;
		border-right: 1px solid #8c9096;
	}

	.palette {
		display: flex;
		flex-direction: column;
		align-items: center;
		width: 50px;
		border-right: 1px solid #8c9096;
		padding: 1px 0;
	}

	.palette button {
		display: grid;
		place-items: center;
		width: 100%;
		height: 42px;
	}

	.palette hr {
		width: 30px;
		margin: 6px 0 7px;
		border: 0;
		border-top: 1px solid #aaa;
		border-bottom: 1px solid #fff;
	}

	.spacer {
		flex: 1;
	}

	.canvas {
		flex: 1;
		min-width: 0;
		background: #fff;
		font-family: 'Liberation Sans', 'Noto Sans CJK SC', sans-serif;
		font-size: 7px;
	}

	.canvas text {
		white-space: pre;
	}

	.mid, .heading, .remark, .meter {
		text-anchor: middle;
	}

	.end {
		text-anchor: end;
	}

	.heading {
		font-size: 27px;
		font-weight: 300;
	}

	.remark {
		font-size: 13px;
	}

	.meter {
		fill: #3f74d0;
	}

	.port {
		fill: #355f66;
	}

	.area {
		fill: #e5e5ff;
		stroke: #6c6f80;
	}

	.block {
		fill: #fff;
		stroke: #1a1a1a;
	}

	.sig {
		fill: none;
		stroke: #111;
	}

	.wire {
		fill: none;
		stroke: #2b67cc;
	}

	.part {
		fill: none;
		stroke: #5b8bdc;
	}

	.fillpart, .joint {
		fill: #2f6bd0;
	}

	.pale {
		fill: none;
		stroke: #a9c1ec;
		stroke-width: 2;
	}

	.plate {
		stroke: #3f74d6;
		stroke-width: 2;
	}

	.ps {
		fill: none;
		stroke: #a35a62;
	}

	.gate {
		fill: #fff;
		stroke: #333;
	}

	.mark {
		fill: none;
		stroke: #fb3737;
		stroke-width: 3;
	}

	.off .block {
		fill: #f2f2fd;
		stroke: #9393a2;
	}

	.off .sig {
		stroke: #85858f;
	}

	.off .solid, .off text {
		fill: #7d7d8a;
	}

	.canvas .percent {
		fill: #5f9f6a;
	}

	.scroll {
		width: 25px;
		background: #f0f0f0;
	}

	.thumb {
		width: 11px;
		height: 498px;
		margin: 345px auto 0;
		background: #858585;
	}

	.dock {
		width: 28px;
		padding: 2px 2px 0 7px;
	}

	.dock button {
		width: 27px;
		height: 112px;
		box-sizing: border-box;
		border: 1px solid #ccc;
		background: #fff;
		font-size: 17px;
		line-height: 24px;
		writing-mode: vertical-rl;
	}

	.status {
		display: grid;
		position: relative;
		grid-template-columns: 19fr auto 18fr;
		align-items: center;
		height: 28px;
		padding: 0 9px 0 6px;
		color: #111;
	}

	.status a {
		justify-self: end;
		color: #00008b;
		text-decoration: none;
	}

	.credit {
		position: absolute;
		right: 8px;
		color: #8a8a8a;
		font-size: 15px;
		opacity: 0.8;
	}
</style>
